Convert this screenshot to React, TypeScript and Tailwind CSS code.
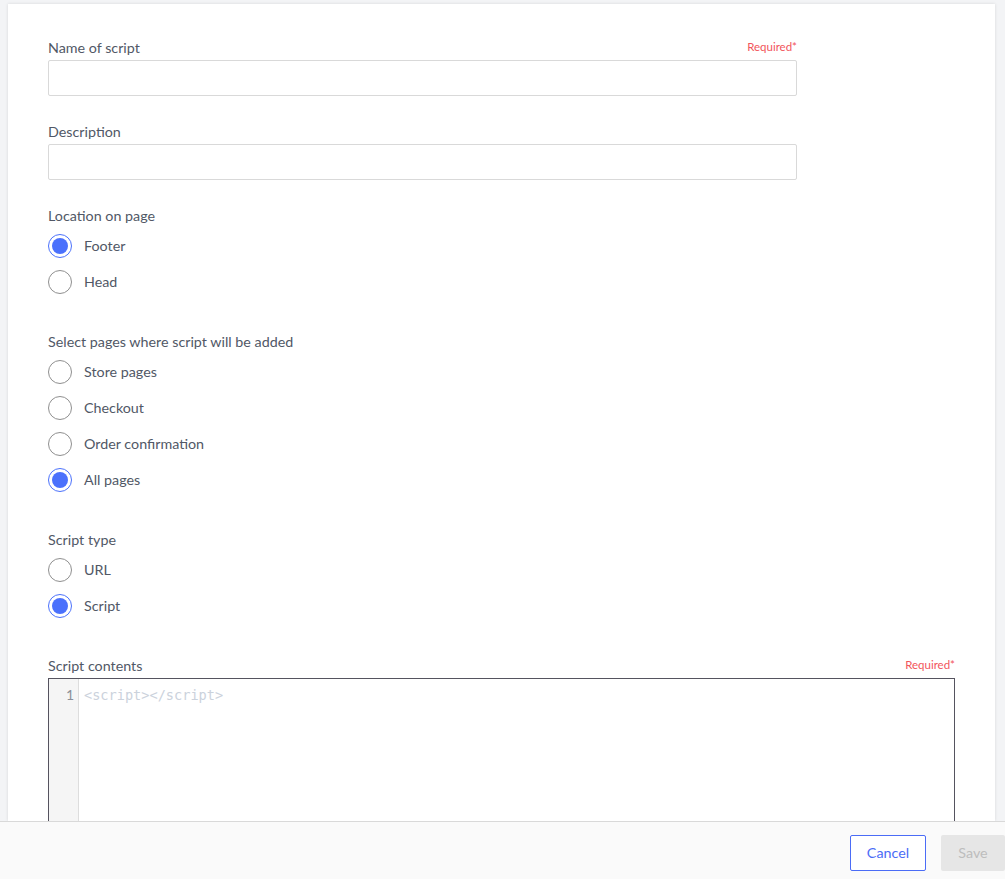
import React from "react";

const font = { fontFamily: "Lato, 'Open Sans', sans-serif" };

function FieldLabel({ text, required }: { text: string; required?: boolean }) {
  return (
    <div className="flex h-5 items-center justify-between mb-0.5">
      <span className="text-[14.3px] text-[#515866]">{text}</span>
      {required && <span className="-mt-[2px] text-[11.5px] text-[#f2545b]">Required*</span>}
    </div>
  );
}

function Radio({ label, checked }: { label: string; checked?: boolean }) {
  return (
    <label className="flex h-9 items-center gap-3 cursor-pointer">
      {checked ? (
        <span className="flex h-6 w-6 items-center justify-center rounded-full border-[1.5px] border-[#4b71fc] bg-white">
          <span className="h-4 w-4 rounded-full bg-[#4b71fc]" />
        </span>
      ) : (
        <span className="h-6 w-6 rounded-full border border-[#8f8f8f] bg-white" />
      )}
      <span className="-mt-px text-[14.3px] text-[#515866]">{label}</span>
    </label>
  );
}

export default function App() {
  return (
    <div className="flex h-[879px] flex-col overflow-hidden bg-[#f3f4f6]" style={font}>
      <div className="flex-1 overflow-hidden pl-2 pr-[10px] pt-1">
        <div className="h-full bg-white px-10 pt-[34px] shadow-[0_0_3px_rgba(0,0,0,0.12)]">
          <div className="w-[749px]">
            <FieldLabel text="Name of script" required />
            <div className="h-9 rounded-[2px] border border-[#d9d9d9] bg-white" />
          </div>
          <div className="mt-[26px] w-[749px]">
            <FieldLabel text="Description" />
            <div className="h-9 rounded-[2px] border border-[#d9d9d9] bg-white" />
          </div>
          <div className="mt-[26px]">
            <FieldLabel text="Location on page" />
            <Radio label="Footer" checked />
            <Radio label="Head" />
          </div>
          <div className="mt-8">
            <FieldLabel text="Select pages where script will be added" />
            <Radio label="Store pages" />
            <Radio label="Checkout" />
            <Radio label="Order confirmation" />
            <Radio label="All pages" checked />
          </div>
          <div className="mt-8">
            <FieldLabel text="Script type" />
            <Radio label="URL" />
            <Radio label="Script" checked />
          </div>
          <div className="mt-8 w-[907px]">
            <FieldLabel text="Script contents" required />
            <div className="flex h-[300px] border border-[#55535f] bg-white">
              <div className="w-[30px] shrink-0 border-r border-[#dddddd] bg-[#f5f5f5] pr-[4px] pt-[6px] text-right text-[14px] leading-5 text-[#8a8f99]">
                1
              </div>
              <div
                className="pl-[5px] pt-[6px] text-[13.6px] leading-5 text-[#cbd2dc]"
                style={{ fontFamily: "'DejaVu Sans Mono', 'Liberation Mono', monospace" }}
              >
                {"<script></script>"}
              </div>
            </div>
          </div>
        </div>
      </div>
      <div className="flex h-[58px] shrink-0 items-start justify-end gap-[15px] border-t border-[#d9d9d9] bg-[#fafafa] pt-[13px]">
        <button className="h-9 w-[76px] rounded-[2px] border border-[#4b6cf6] bg-white text-[14.3px] text-[#4b6cf6]">
          Cancel
        </button>
        <button className="h-9 w-[64px] rounded-[2px] bg-[#e6e6e6] text-[14.3px] text-[#bdbdbd]">
          Save
        </button>
      </div>
    </div>
  );
}
